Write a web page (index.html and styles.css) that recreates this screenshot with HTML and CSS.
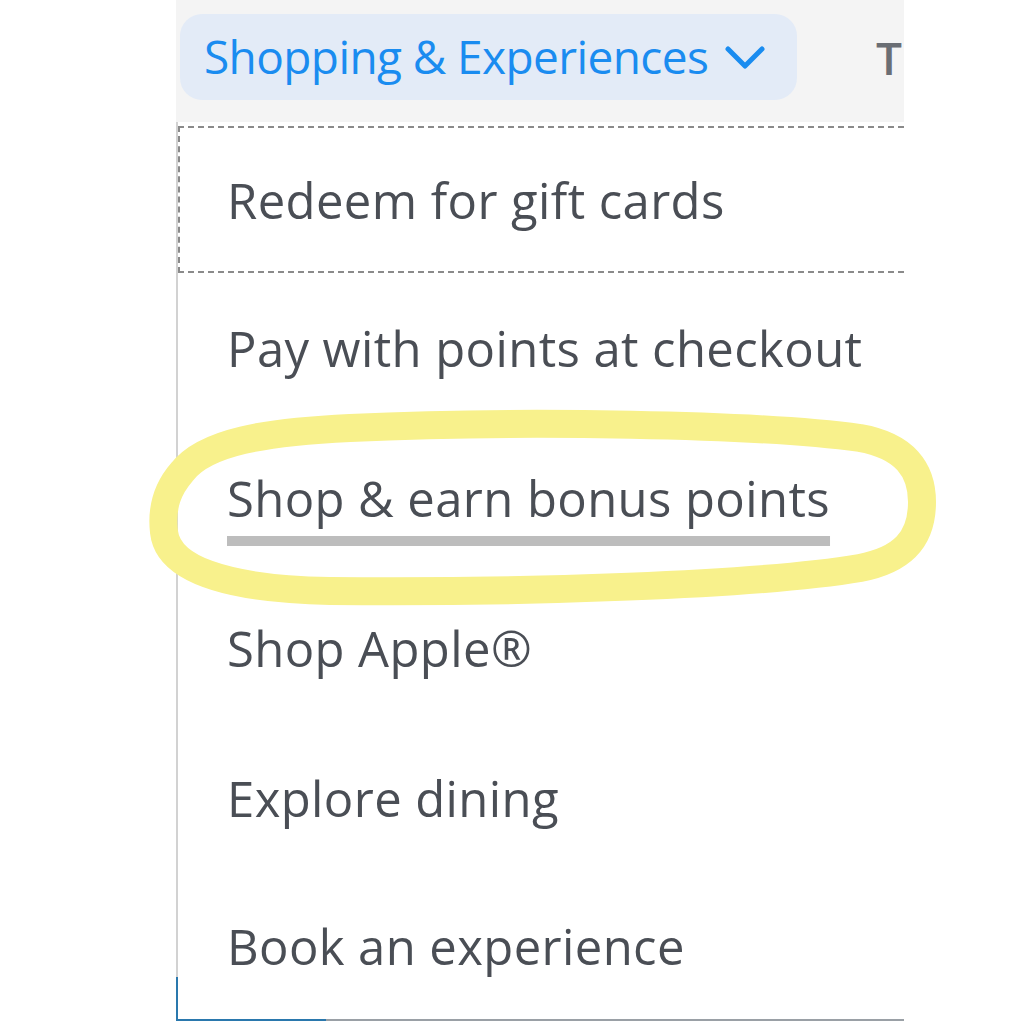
FILE: index.html
```html
<!DOCTYPE html>
<html lang="en">
<head>
<meta charset="utf-8">
<title>Shopping &amp; Experiences menu</title>
<link rel="stylesheet" href="styles.css">
</head>
<body>
<div class="page">
  <div class="col">
    <div class="topbar">
      <button class="tab tab-active">
        <span>Shopping &amp; Experiences</span>
        <svg class="chev" width="40" height="24" viewBox="0 0 40 24"><path d="M3 3 L20 20 L37 3" fill="none" stroke="currentColor" stroke-width="5" stroke-linecap="round" stroke-linejoin="round"/></svg>
      </button>
      <span class="tab tab-next">Travel</span>
    </div>
    <ul class="menu">
      <li class="item item-focus"><span class="label">Redeem for gift cards</span></li>
      <li class="item"><span class="label">Pay with points at checkout</span></li>
      <li class="item"><span class="label label-hover">Shop &amp; earn bonus points</span></li>
      <li class="item"><span class="label">Shop Apple®</span></li>
      <li class="item"><span class="label">Explore dining</span></li>
      <li class="item item-last"><span class="label">Book an experience</span></li>
    </ul>
    <div class="footer"><span class="footer-blue"></span><span class="footer-text">LOG IN TODAY</span></div>
  </div>
  <svg class="circle" width="1024" height="1024" viewBox="0 0 1024 1024">
    <path d="M182 472 C205 442 265 432 350 428 C520 420 760 424 860 438 C905 446 922 470 922 502 C922 540 902 560 860 568 C760 585 520 593 330 591 C222 589 168 568 164 532 C161 506 168 488 182 472 Z" fill="none" stroke="#f8f18c" stroke-width="28" stroke-linejoin="round"/>
  </svg>
</div>
</body>
</html>
```
FILE: styles.css
```css
html, body {
  margin: 0;
  padding: 0;
  background: #ffffff;
}
body {
  font-family: "Open Sans", "Noto Sans", sans-serif;
}
.page {
  position: relative;
  width: 1024px;
  height: 1024px;
  overflow: hidden;
}
.col {
  margin-left: 176px;
  width: 728px;
  display: flex;
  flex-direction: column;
}
.topbar {
  background: #f4f4f4;
  height: 122px;
  box-sizing: border-box;
  padding: 14px 0 0 4px;
  display: flex;
  align-items: flex-start;
  gap: 79px;
  overflow: hidden;
  white-space: nowrap;
}
.tab {
  font-family: inherit;
  border: 0;
  margin: 0;
}
.tab-active {
  flex: none;
  width: 617px;
  height: 86px;
  border-radius: 22px;
  background: #e3ebf7;
  color: #1a8cf0;
  font-size: 46px;
  display: flex;
  align-items: center;
  gap: 17px;
  padding: 0 0 2px 24px;
  box-sizing: border-box;
  letter-spacing: -0.6px;
}
.chev {
  flex: none;
  margin-top: 4px;
}
.tab-next {
  color: #6a6e74;
  font-size: 46px;
  font-weight: 600;
  line-height: 86px;
}
.menu {
  list-style: none;
  margin: 0;
  padding: 0;
  border-left: 2px solid #d2d2d2;
  display: flex;
  flex-direction: column;
}
.item {
  height: 150px;
  display: flex;
  align-items: center;
  padding-left: 49px;
  font-size: 49px;
  color: #4a4e55;
  letter-spacing: 0.4px;
  box-sizing: border-box;
  white-space: nowrap;
}
.item-focus {
  height: 147px;
  margin: 4px 0 0 0;
  padding-left: 47px;
  border: 2px dashed #8a8a8a;
  border-right: 0;
}
.item-last {
  height: 146px;
  position: relative;
}
.item-last::after {
  content: "";
  position: absolute;
  left: -2px;
  bottom: 0;
  width: 2px;
  height: 42px;
  background: #2a78ad;
}
.label-hover {
  text-decoration: underline;
  text-decoration-color: #bdbdbd;
  text-decoration-thickness: 10px;
  text-underline-offset: 19px;
}
.footer {
  height: 40px;
  border-top: 2px solid #9aa0a6;
  position: relative;
}
.footer-blue {
  display: block;
  width: 150px;
  height: 2px;
  margin-top: -2px;
  background: #2a78ad;
}
.footer-text {
  display: block;
  margin-left: 400px;
  color: #555;
  font-size: 40px;
}
.circle {
  position: absolute;
  left: 0;
  top: 0;
  pointer-events: none;
}
```
